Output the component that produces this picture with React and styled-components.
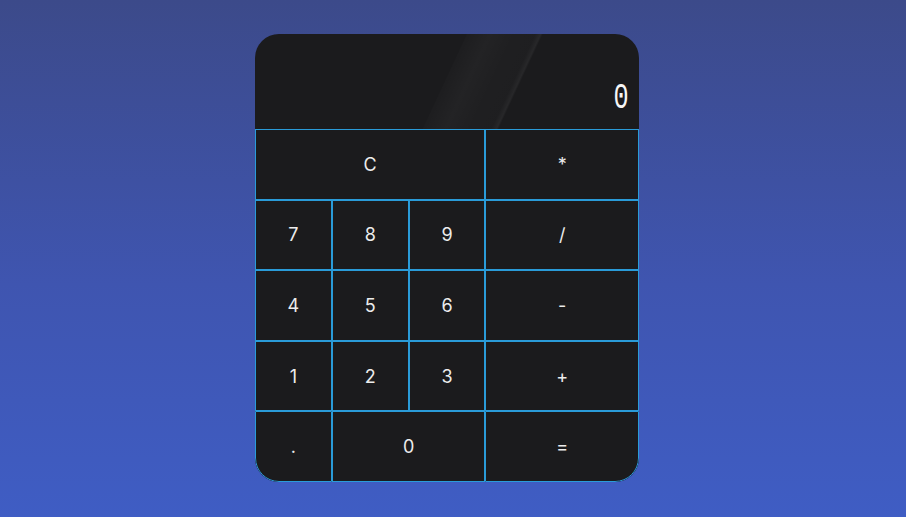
import React from "react";
import styled, { createGlobalStyle } from "styled-components";

const GlobalStyle = createGlobalStyle`
  html, body {
    margin: 0;
    padding: 0;
    height: 100%;
  }
  body {
    font-family: "Inter", "Liberation Sans", sans-serif;
  }
  #root {
    height: 100%;
  }
`;

const keys = [
  { label: "C", span: 3 },
  { label: "*", span: 2 },
  { label: "7" },
  { label: "8" },
  { label: "9" },
  { label: "/", span: 2 },
  { label: "4" },
  { label: "5" },
  { label: "6" },
  { label: "-", span: 2 },
  { label: "1" },
  { label: "2" },
  { label: "3" },
  { label: "+", span: 2 },
  { label: ".", corner: "left" },
  { label: "0", span: 2 },
  { label: "=", span: 2, corner: "right" },
];

const App = () => {
  return (
    <Page>
      <GlobalStyle />
      <Calculator>
        <Display>
          <Glare />
          <Readout>0</Readout>
        </Display>
        {keys.map((key) => (
          <Key key={key.label} $span={key.span || 1} $corner={key.corner}>
            {key.label}
          </Key>
        ))}
      </Calculator>
    </Page>
  );
};

const Page = styled.div`
  display: flex;
  height: 100vh;
  justify-content: center;
  align-items: center;
  padding-right: 12px;
  padding-bottom: 1px;
  box-sizing: border-box;
  background: linear-gradient(180deg, #3c4a8a 0%, #3f55b0 55%, #3f5dc4 100%);
`;

const Calculator = styled.div`
  display: grid;
  grid-template-columns: repeat(5, 1fr);
  grid-template-rows: 95px repeat(5, 1fr);
  width: 384px;
  height: 448px;
  background-color: #1b1b1d;
  border-radius: 24px;
  overflow: hidden;
`;

const Display = styled.div`
  grid-column: 1 / -1;
  position: relative;
  display: flex;
  justify-content: flex-end;
  align-items: flex-end;
  padding: 0 10px 17px 0;
  overflow: hidden;
`;

const Glare = styled.div`
  position: absolute;
  top: 0;
  bottom: 0;
  left: 212px;
  width: 76px;
  transform: skewX(-25deg);
  transform-origin: top left;
  background: linear-gradient(
    90deg,
    rgba(255, 255, 255, 0.01) 0%,
    rgba(255, 255, 255, 0.035) 30%,
    rgba(255, 255, 255, 0.02) 60%,
    rgba(255, 255, 255, 0.015) 90%,
    rgba(255, 255, 255, 0.055) 97%,
    rgba(255, 255, 255, 0) 100%
  );
  pointer-events: none;
`;

const Readout = styled.span`
  position: relative;
  font-family: "Liberation Mono", monospace;
  font-size: 36px;
  font-weight: 400;
  line-height: 26px;
  color: #f6f6f6;
  transform: scaleX(0.7);
  transform-origin: right center;
`;

const Key = styled.button`
  grid-column: span ${(p) => p.$span};
  display: flex;
  justify-content: center;
  align-items: center;
  margin: 0;
  padding: 0;
  background-color: #1b1b1d;
  border: 1px solid #2a9bd8;
  border-bottom-left-radius: ${(p) => (p.$corner === "left" ? "24px" : "0")};
  border-bottom-right-radius: ${(p) => (p.$corner === "right" ? "24px" : "0")};
  font-family: "Inter", "Liberation Sans", sans-serif;
  font-size: 18px;
  font-weight: 400;
  color: #ececec;
  cursor: pointer;
`;

export default App;
